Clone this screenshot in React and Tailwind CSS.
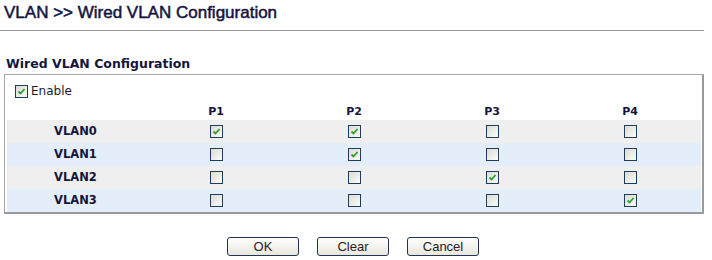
const ports = ['P1', 'P2', 'P3', 'P4']

const rows = [
  { name: 'VLAN0', checks: [true, true, false, false] },
  { name: 'VLAN1', checks: [false, true, false, false] },
  { name: 'VLAN2', checks: [false, false, true, false] },
  { name: 'VLAN3', checks: [false, false, false, true] },
]

function Box({ checked }) {
  return (
    <span className="inline-flex items-center justify-center w-[13px] h-[13px] border border-[#1c3d5e] bg-gradient-to-br from-[#dcdcd6] to-[#fbfbf8]">
      {checked && (
        <svg width="9" height="9" viewBox="0 0 9 9">
          <path d="M1.5 4.5 L3.5 6.5 L7.5 2" fill="none" stroke="#2ba02b" strokeWidth="1.8" />
        </svg>
      )}
    </span>
  )
}

function Btn({ children }) {
  return (
    <button className="w-[72px] h-[19px] border border-[#1e3554] rounded-[3px] bg-gradient-to-b from-white to-[#e8e6dc] text-[13px] leading-none text-[#222] font-['Liberation_Sans',sans-serif]">
      {children}
    </button>
  )
}

export default function App() {
  return (
    <div className="w-[712px] h-[260px] bg-white font-['DejaVu_Sans',sans-serif] text-[#14143c]">
      <div className="pl-[4px] pt-[3px] h-[30px] text-[17px] leading-[20px] text-[#141440] [-webkit-text-stroke:0.5px_#141440] font-['Liberation_Sans',sans-serif]">
        VLAN &gt;&gt; Wired VLAN Configuration
      </div>
      <div className="w-[704px] border-t border-[#999]" />

      <div className="pl-[6px] pt-[25px] h-[43px] text-[12.5px] font-bold leading-[16px]">
        Wired VLAN Configuration
      </div>

      <div className="ml-[4px] w-[700px] h-[140px] border border-[#a6a6a6] border-r-2 border-b-2 border-r-[#9a9a9a] border-b-[#9a9a9a] pl-[2px] pr-[1px]">
        <div className="flex items-center gap-[3px] pl-[8px] pt-[3px] h-[29px] text-[12px]">
          <Box checked />
          <span className="text-[#1a1a30]">Enable</span>
        </div>
        <div className="grid grid-cols-[140px_138px_138px_138px_138px] h-[16px] items-center text-[11px] font-bold">
          <div />
          {ports.map(p => (
            <div key={p} className="text-center">{p}</div>
          ))}
        </div>
        {rows.map((r, i) => (
          <div
            key={r.name}
            className={`grid grid-cols-[140px_138px_138px_138px_138px] h-[23px] items-center ${i % 2 === 0 ? 'bg-[#efefef]' : 'bg-[#e4eefa]'}`}
          >
            <div className="pl-[47px] text-[11.5px] font-bold">{r.name}</div>
            {r.checks.map((c, j) => (
              <div key={j} className="flex justify-center">
                <Box checked={c} />
              </div>
            ))}
          </div>
        ))}
      </div>

      <div className="flex gap-[18px] pl-[227px] pt-[23px]">
        <Btn>OK</Btn>
        <Btn>Clear</Btn>
        <Btn>Cancel</Btn>
      </div>
    </div>
  )
}
